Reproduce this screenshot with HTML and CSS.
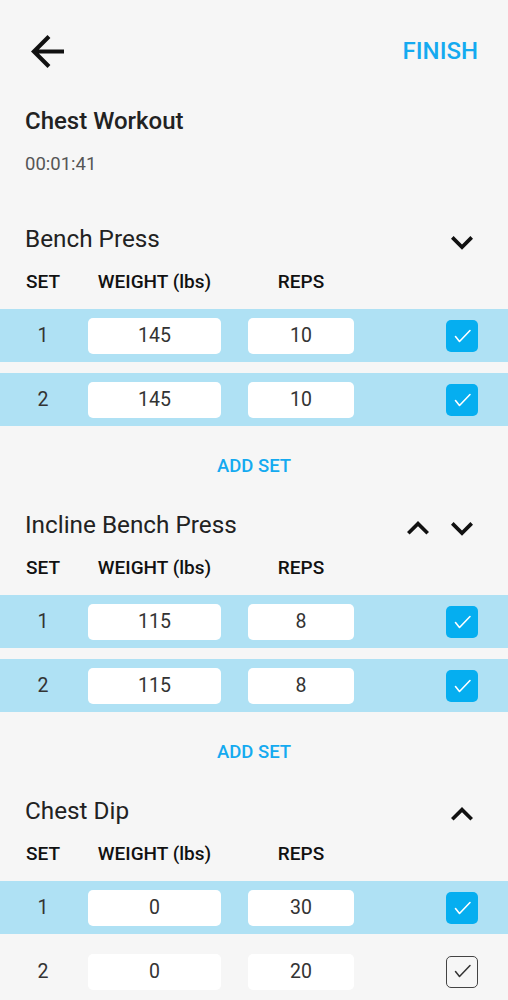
FILE: index.html
```html
<!DOCTYPE html>
<html lang="en">
<head>
<meta charset="utf-8">
<title>Chest Workout</title>
<link rel="stylesheet" href="styles.css">
</head>
<body>
<div class="screen">
  <header class="topbar">
    <button class="icon-btn back" aria-label="Back">
      <svg viewBox="4 4 16 16" width="33" height="33"><path d="M20 11H7.83l5.59-5.59L12 4l-8 8 8 8 1.41-1.41L7.83 13H20v-2z" fill="#111"/></svg>
    </button>
    <button class="finish">FINISH</button>
  </header>

  <div class="workout">
    <h1 class="workout-title">Chest Workout</h1>
    <div class="timer">00:01:41</div>
  </div>

  <section class="exercise">
    <div class="ex-head">
      <h2 class="ex-title">Bench Press</h2>
      <div class="ex-actions">
        <svg class="chev" viewBox="6 8 12 8" width="22" height="14.7"><path d="M16.59 8.59L12 13.17 7.41 8.59 6 10l6 6 6-6z" fill="#111"/></svg>
      </div>
    </div>
    <div class="grid cols">
      <span class="c-set">SET</span><span class="c-w">WEIGHT (lbs)</span><span class="c-r">REPS</span>
    </div>
    <div class="grid set done">
      <span class="num">1</span><div class="field">145</div><div class="field">10</div><span></span>
      <span class="check on"><svg viewBox="0 0 32 32" width="32" height="32"><path d="M9.5 16.5l4 5 10.5-11" fill="none" stroke="#fff" stroke-width="1.6" stroke-linecap="round" stroke-linejoin="round"/></svg></span>
    </div>
    <div class="grid set done">
      <span class="num">2</span><div class="field">145</div><div class="field">10</div><span></span>
      <span class="check on"><svg viewBox="0 0 32 32" width="32" height="32"><path d="M9.5 16.5l4 5 10.5-11" fill="none" stroke="#fff" stroke-width="1.6" stroke-linecap="round" stroke-linejoin="round"/></svg></span>
    </div>
    <div class="add"><button class="add-btn">ADD SET</button></div>
  </section>

  <section class="exercise">
    <div class="ex-head">
      <h2 class="ex-title">Incline Bench Press</h2>
      <div class="ex-actions">
        <svg class="chev" viewBox="6 8 12 8" width="22" height="14.7"><path d="M7.41 15.41L12 10.83l4.59 4.58L18 14l-6-6-6 6z" fill="#111"/></svg>
        <svg class="chev" viewBox="6 8 12 8" width="22" height="14.7"><path d="M16.59 8.59L12 13.17 7.41 8.59 6 10l6 6 6-6z" fill="#111"/></svg>
      </div>
    </div>
    <div class="grid cols">
      <span class="c-set">SET</span><span class="c-w">WEIGHT (lbs)</span><span class="c-r">REPS</span>
    </div>
    <div class="grid set done">
      <span class="num">1</span><div class="field">115</div><div class="field">8</div><span></span>
      <span class="check on"><svg viewBox="0 0 32 32" width="32" height="32"><path d="M9.5 16.5l4 5 10.5-11" fill="none" stroke="#fff" stroke-width="1.6" stroke-linecap="round" stroke-linejoin="round"/></svg></span>
    </div>
    <div class="grid set done">
      <span class="num">2</span><div class="field">115</div><div class="field">8</div><span></span>
      <span class="check on"><svg viewBox="0 0 32 32" width="32" height="32"><path d="M9.5 16.5l4 5 10.5-11" fill="none" stroke="#fff" stroke-width="1.6" stroke-linecap="round" stroke-linejoin="round"/></svg></span>
    </div>
    <div class="add"><button class="add-btn">ADD SET</button></div>
  </section>

  <section class="exercise">
    <div class="ex-head">
      <h2 class="ex-title">Chest Dip</h2>
      <div class="ex-actions">
        <svg class="chev" viewBox="6 8 12 8" width="22" height="14.7"><path d="M7.41 15.41L12 10.83l4.59 4.58L18 14l-6-6-6 6z" fill="#111"/></svg>
      </div>
    </div>
    <div class="grid cols">
      <span class="c-set">SET</span><span class="c-w">WEIGHT (lbs)</span><span class="c-r">REPS</span>
    </div>
    <div class="grid set done">
      <span class="num">1</span><div class="field">0</div><div class="field">30</div><span></span>
      <span class="check on"><svg viewBox="0 0 32 32" width="32" height="32"><path d="M9.5 16.5l4 5 10.5-11" fill="none" stroke="#fff" stroke-width="1.6" stroke-linecap="round" stroke-linejoin="round"/></svg></span>
    </div>
    <div class="grid set">
      <span class="num">2</span><div class="field">0</div><div class="field">20</div><span></span>
      <span class="check off"><svg viewBox="0 0 32 32" width="32" height="32"><path d="M9.5 16.5l4 5 10.5-11" fill="none" stroke="#333" stroke-width="1.5" stroke-linecap="round" stroke-linejoin="round"/></svg></span>
    </div>
  </section>
</div>
</body>
</html>
```

FILE: styles.css
```css
* { box-sizing: border-box; }
html, body {
  margin: 0;
  padding: 0;
  background: #f6f6f6;
}
body {
  font-family: Roboto, "Liberation Sans", Arial, sans-serif;
  color: #222;
  overflow: hidden;
}
.screen {
  width: 508px;
  height: 1000px;
  overflow: hidden;
}
button {
  font-family: inherit;
  background: none;
  border: 0;
  padding: 0;
  margin: 0;
  cursor: pointer;
}
.topbar {
  margin-top: 23px;
  height: 56px;
  padding: 0 30px 0 31px;
  display: flex;
  justify-content: space-between;
  align-items: center;
}
.icon-btn {
  display: flex;
  align-items: center;
  justify-content: center;
}
.icon-btn svg { display: block; }
.finish {
  color: #14aaf0;
  font-size: 24px;
  font-weight: 500;
  line-height: 30px;
  letter-spacing: 0;
}
.workout {
  padding: 27px 25px 0;
}
.workout-title {
  margin: 0;
  font-size: 24px;
  font-weight: 500;
  line-height: 30px;
  color: #222;
}
.timer {
  margin-top: 16px;
  font-size: 18.5px;
  line-height: 24px;
  color: #555;
}
.workout + .exercise { margin-top: 41px; }
.ex-head {
  height: 44px;
  padding: 0 35px 0 25px;
  display: flex;
  align-items: center;
  justify-content: space-between;
}
.ex-title {
  margin: 0;
  font-size: 24.3px;
  font-weight: 400;
  line-height: 44px;
  color: #222;
}
.ex-actions {
  display: flex;
  gap: 22px;
  padding-top: 7px;
}
.chev { display: block; }
.grid {
  display: grid;
  grid-template-columns: 36px 133px 106px 1fr 32px;
  column-gap: 27px;
  padding: 0 30px 0 25px;
  align-items: center;
}
.cols {
  height: 48px;
  padding-bottom: 8px;
  font-size: 19px;
  font-weight: 500;
  color: #111;
}
.cols span { text-align: center; white-space: nowrap; }
.set {
  height: 53px;
}
.set + .set { margin-top: 11px; }
.set.done { background: #afe1f4; }
.num {
  text-align: center;
  font-size: 19.5px;
  color: #333;
}
.field {
  height: 36px;
  background: #fff;
  border-radius: 5px;
  display: flex;
  align-items: center;
  justify-content: center;
  font-size: 19.5px;
  color: #333;
}
.check {
  width: 32px;
  height: 32px;
  border-radius: 5px;
  display: block;
}
.check svg { display: block; }
.check.on { background: #05aef0; }
.check.off {
  border: 1.5px solid #444;
  background: transparent;
}
.check.off svg { margin: -1.5px; }
.add {
  height: 77px;
  padding-top: 30px;
  display: flex;
  justify-content: center;
  align-items: flex-start;
}
.add-btn {
  color: #14aaf0;
  font-size: 18.5px;
  font-weight: 500;
  line-height: 20px;
}
```
